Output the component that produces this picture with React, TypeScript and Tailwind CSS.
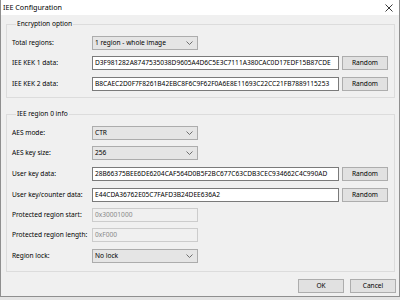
import React from 'react';

const KEK1 = 'D3F981282A8747535038D9605A4D6C5E3C7111A380CAC0D17EDF15B87CDE';
const KEK2 = 'B8CAEC2D0F7F8261B42EBC8F6C9F62F0A6E8E11693C22CC21FB7889115253';
const USER_KEY = '28B66375BEE6DE6204CAF564D0B5F2BC677C63CDB3CEC934662C4C990AD';
const COUNTER = 'E44CDA36762E05C7FAFD3B24DEE636A2';

const Chevron = () => (
  <svg width="7" height="4" viewBox="0 0 7 4" className="shrink-0">
    <polyline points="0.5,0.5 3.5,3.5 6.5,0.5" fill="none" stroke="#606060" strokeWidth="0.9" />
  </svg>
);

const Combo = ({ value }: { value: string }) => (
  <div className="w-[106px] h-[14px] flex items-center justify-between pl-[2px] pr-[4px] bg-[#e5e5e5] border border-[#acacac]">
    <span className="whitespace-nowrap">{value}</span>
    <Chevron />
  </div>
);

const TextBox = ({ value, disabled, wide }: { value: string; disabled?: boolean; wide?: boolean }) => (
  <div
    className={
      'h-[14px] flex items-center pl-[2px] overflow-hidden whitespace-nowrap border ' +
      (wide ? 'w-[247px] ' : 'w-[106px] ') +
      (disabled ? 'bg-[#f0f0f0] border-[#cccccc] text-[#8a8a8a]' : 'bg-white border-[#7a7a7a]')
    }
  >
    {value}
  </div>
);

const Btn = ({ children }: { children: React.ReactNode }) => (
  <button className="w-[46px] h-[14px] flex items-center justify-center bg-[#e1e1e1] border border-[#adadad] text-black">
    {children}
  </button>
);

const Row = ({ label, className, children }: { label: string; className?: string; children: React.ReactNode }) => (
  <div className={'flex items-center h-[14px] ' + (className ?? '')}>
    <span className="w-[80px] shrink-0 whitespace-nowrap">{label}</span>
    {children}
  </div>
);

const Group = ({ title, className, children }: { title: string; className?: string; children: React.ReactNode }) => (
  <fieldset className={'border border-[#dcdcdc] ' + (className ?? '')}>
    <legend className="ml-[4px] px-[1px] leading-[10px]">{title}</legend>
    {children}
  </fieldset>
);

export default function App() {
  return (
    <div className="w-[400px] h-[300px] bg-[#e4e4e4]">
      <div className="w-[400px] h-[297px] flex flex-col bg-[#f0f0f0] border-x border-b border-[#8f8f8f] text-[6.6px] text-black font-['Noto_Sans',sans-serif]">
        <div className="h-[15px] shrink-0 bg-white flex items-center justify-between pl-[2px] pr-[6px]">
          <span className="text-[7.2px]">IEE Configuration</span>
          <svg width="8" height="8" viewBox="0 0 8 8">
            <path d="M0.5 0.5 L7.5 7.5 M7.5 0.5 L0.5 7.5" stroke="#222" strokeWidth="0.9" />
          </svg>
        </div>

        <div className="flex flex-col pl-[5px] pr-[4px] pt-[4px]">
          <Group title="Encryption option" className="pl-[5px] pr-[6px] pt-[7px] pb-[6px]">
            <Row label="Total regions:">
              <Combo value="1 region - whole image" />
            </Row>
            <Row label="IEE KEK 1 data:" className="mt-[6px]">
              <TextBox value={KEK1} wide />
              <div className="ml-[3px]">
                <Btn>Random</Btn>
              </div>
            </Row>
            <Row label="IEE KEK 2 data:" className="mt-[7px]">
              <TextBox value={KEK2} wide />
              <div className="ml-[3px]">
                <Btn>Random</Btn>
              </div>
            </Row>
          </Group>

          <Group title="IEE region 0 info" className="mt-[11px] pl-[5px] pr-[6px] pt-[7px] pb-[8px]">
            <Row label="AES mode:">
              <Combo value="CTR" />
            </Row>
            <Row label="AES key size:" className="mt-[6px]">
              <Combo value="256" />
            </Row>
            <Row label="User key data:" className="mt-[7px]">
              <TextBox value={USER_KEY} wide />
              <div className="ml-[3px]">
                <Btn>Random</Btn>
              </div>
            </Row>
            <Row label="User key/counter data:" className="mt-[7px]">
              <TextBox value={COUNTER} wide />
              <div className="ml-[3px]">
                <Btn>Random</Btn>
              </div>
            </Row>
            <Row label="Protected region start:" className="mt-[6px]">
              <TextBox value="0x30001000" disabled />
            </Row>
            <Row label="Protected region length:" className="mt-[6px]">
              <TextBox value="0xF000" disabled />
            </Row>
            <Row label="Region lock:" className="mt-[7px]">
              <Combo value="No lock" />
            </Row>
          </Group>
        </div>

        <div className="flex justify-end gap-[6px] pr-[3px] mt-[7px]">
          <Btn>OK</Btn>
          <Btn>Cancel</Btn>
        </div>
      </div>
    </div>
  );
}
